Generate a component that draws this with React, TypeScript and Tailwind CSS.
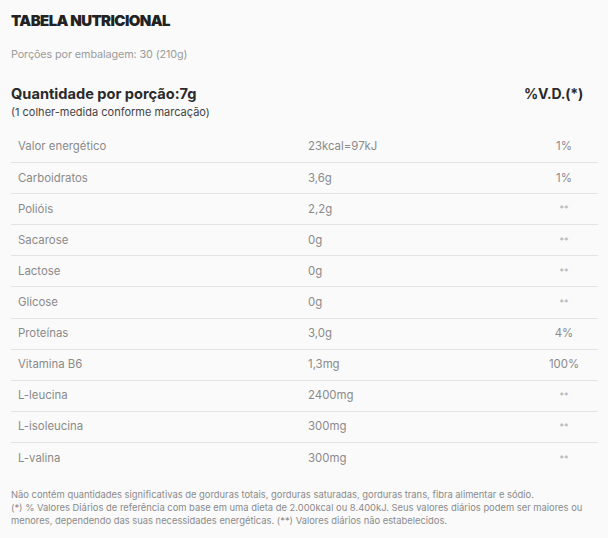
const rows: [string, string, string][] = [
  ["Valor energético", "23kcal=97kJ", "1%"],
  ["Carboidratos", "3,6g", "1%"],
  ["Polióis", "2,2g", "**"],
  ["Sacarose", "0g", "**"],
  ["Lactose", "0g", "**"],
  ["Glicose", "0g", "**"],
  ["Proteínas", "3,0g", "4%"],
  ["Vitamina B6", "1,3mg", "100%"],
  ["L-leucina", "2400mg", "**"],
  ["L-isoleucina", "300mg", "**"],
  ["L-valina", "300mg", "**"],
];

export default function App() {
  return (
    <div className="w-[608px] h-[538px] bg-[#fafafa] px-[11px] pt-[11px] font-['Inter','Liberation_Sans',sans-serif] text-[#333]">
      <h2 className="text-[15px] leading-[20px] font-black tracking-[-0.6px] text-[#222]">
        TABELA NUTRICIONAL
      </h2>
      <p className="mt-[16px] text-[10.8px] leading-[16px] tracking-[-0.1px] text-[#9a9a9a]">
        Porções por embalagem: 30 (210g)
      </p>

      <div className="mt-[22px] flex items-start justify-between pr-[14px]">
        <div>
          <div className="text-[14.6px] leading-[18px] font-bold text-[#2a2a2a]">
            Quantidade por porção:7g
          </div>
          <div className="mt-[1px] text-[11px] leading-[16px] text-[#444]">
            (1 colher-medida conforme marcação)
          </div>
        </div>
        <div className="text-[14px] leading-[18px] font-bold tracking-[-0.2px] text-[#2a2a2a]">%V.D.(*)</div>
      </div>

      <div className="mt-[12px] w-[587px]">
        {rows.map(([name, value, vd], i) => (
          <div
            key={name}
            className={`grid grid-cols-[290px_1fr_68px] h-[31.1px] items-center text-[11.4px] text-[#8a8a8a] ${
              i < rows.length - 1 ? "border-b border-[#e3e3e3]" : ""
            }`}
          >
            <span className="pl-[7px]">{name}</span>
            <span className="pl-[7px]">{value}</span>
            <span className={`text-center ${vd === "**" ? "text-[9px] text-[#aaa]" : ""}`}>{vd}</span>
          </div>
        ))}
      </div>

      <div className="mt-[14px] text-[9.4px] leading-[13px] text-[#8a8a8a]">
        <p>Não contém quantidades significativas de gorduras totais, gorduras saturadas, gorduras trans, fibra alimentar e sódio.</p>
        <p>
          (*) % Valores Diários de referência com base em uma dieta de 2.000kcal ou 8.400kJ. Seus valores diários podem ser maiores ou
          menores, dependendo das suas necessidades energéticas. (**) Valores diários não estabelecidos.
        </p>
      </div>
    </div>
  );
}
